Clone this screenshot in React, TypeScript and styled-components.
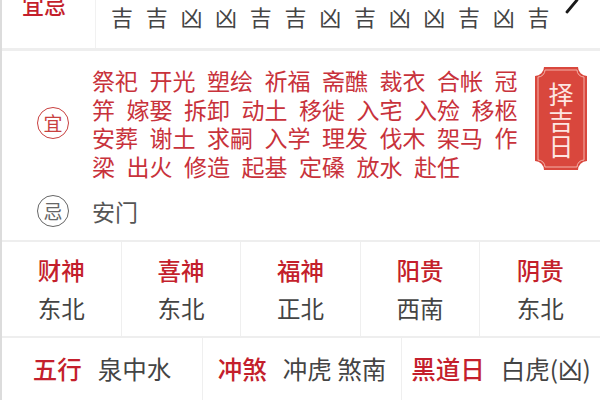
import * as React from 'react'
import styled, { createGlobalStyle } from 'styled-components'

const GlobalStyle = createGlobalStyle`
  html, body {
    margin: 0;
    padding: 0;
    background: #fff;
  }
  body {
    font-family: "Noto Sans CJK SC", "Noto Sans", sans-serif;
  }
`

const RED = '#c41f2c'
const SOFT_RED = '#c8323b'
const GRAY = '#444'

const Page = styled.div`
  width: 598px;
  height: 400px;
  overflow: hidden;
  border-left: 2px solid #dcdcdc;
  background: #fff;
`

const TopRow = styled.div`
  display: flex;
  align-items: center;
  height: 88px;
  margin-top: -40px;
`

const TopLabel = styled.div`
  width: 73px;
  padding-left: 20px;
  align-self: stretch;
  display: flex;
  align-items: center;
  border-right: 1px solid #f1f1f1;
  font-size: 22px;
  font-weight: 500;
  color: ${RED};
`

const Hours = styled.div`
  display: flex;
  flex-direction: column;
  padding-left: 15px;
  margin-top: -6px;
  flex: 1;
`

const HourLine = styled.div<{ $h: number }>`
  display: flex;
  gap: 12.7px;
  height: ${p => p.$h}px;
  line-height: 27px;
  font-size: 22px;
  color: ${GRAY};
`

const Arrow = styled.div`
  width: 40px;
  display: flex;
  justify-content: center;
  padding-right: 8px;
  margin-top: -8px;
`

const Divider = styled.div<{ $h?: number }>`
  height: ${p => p.$h ?? 3}px;
  background: #eeeeee;
`

const AdviceSection = styled.div`
  display: flex;
  flex-direction: column;
  padding: 15px 0 13px;
`

const AdviceRow = styled.div<{ $gap?: number }>`
  display: flex;
  align-items: center;
  margin-top: ${p => p.$gap ?? 0}px;
`

const IconCol = styled.div`
  width: 90px;
  display: flex;
  padding-left: 35px;
  box-sizing: border-box;
`

const Seal = styled.div<{ $color: string }>`
  width: 32px;
  height: 32px;
  border-radius: 50%;
  border: 1.3px solid ${p => p.$color};
  color: ${p => p.$color};
  font-size: 19px;
  line-height: 30px;
  text-align: center;
  box-sizing: border-box;
`

const GoodText = styled.div`
  flex: 1;
  font-size: 23px;
  line-height: 28.6px;
  color: ${SOFT_RED};
  white-space: pre;
`

const BadText = styled.div`
  flex: 1;
  font-size: 23px;
  line-height: 28.6px;
  color: #555;
`

const Badge = styled.div`
  position: relative;
  width: 52px;
  height: 103px;
  margin: 1px 13px 0 0;
  align-self: flex-start;
  display: flex;
  align-items: center;
  justify-content: center;
`

const BadgeShape = styled.svg`
  position: absolute;
  inset: 0;
`

const BadgeText = styled.div`
  position: relative;
  width: 26px;
  font-size: 25px;
  line-height: 26px;
  color: #fde6e2;
  text-align: center;
`

const GodsRow = styled.div`
  display: grid;
  grid-template-columns: repeat(5, 1fr);
  height: 94px;
`

const GodCell = styled.div<{ $last?: boolean }>`
  display: flex;
  flex-direction: column;
  align-items: center;
  justify-content: center;
  border-right: ${p => (p.$last ? 'none' : '1px solid #efefef')};
  font-size: 23.5px;
  line-height: 38px;
`

const GodName = styled.div`
  color: ${RED};
  font-weight: 500;
`

const GodDir = styled.div`
  color: ${GRAY};
`

const InfoRow = styled.div`
  display: grid;
  grid-template-columns: 201px 199px 1fr;
  height: 62px;
`

const InfoCell = styled.div<{ $last?: boolean }>`
  display: flex;
  align-items: center;
  justify-content: center;
  gap: 16px;
  border-right: ${p => (p.$last ? 'none' : '1px solid #efefef')};
  font-size: 24.5px;
  padding-bottom: 1px;
`

const InfoLabel = styled.span`
  color: ${RED};
  font-weight: 500;
`

const InfoValue = styled.span`
  color: ${GRAY};
`

const branches = ['子', '丑', '寅', '卯', '辰', '巳', '午', '未', '申', '酉', '戌', '亥', '子']
const luck = ['吉', '吉', '凶', '凶', '吉', '吉', '凶', '吉', '凶', '凶', '吉', '凶', '吉']

const goodLines = [
  '祭祀 开光 塑绘 祈福 斋醮 裁衣 合帐 冠',
  '笄 嫁娶 拆卸 动土 移徙 入宅 入殓 移柩',
  '安葬 谢土 求嗣 入学 理发 伐木 架马 作',
  '梁 出火 修造 起基 定磉 放水 赴任',
]

const gods = [
  ['财神', '东北'],
  ['喜神', '东北'],
  ['福神', '正北'],
  ['阳贵', '西南'],
  ['阴贵', '东北'],
]

const info = [
  ['五行', '泉中水'],
  ['冲煞', '冲虎 煞南'],
  ['黑道日', '白虎(凶)'],
]

const shape = (x: number, y: number, w: number, h: number, r: number) =>
  `M${x + r},${y} H${x + w - r} A${r},${r} 0 0 0 ${x + w},${y + r} V${y + h - r} ` +
  `A${r},${r} 0 0 0 ${x + w - r},${y + h} H${x + r} A${r},${r} 0 0 0 ${x},${y + h - r} ` +
  `V${y + r} A${r},${r} 0 0 0 ${x + r},${y} Z`

const PickDayBadge = () => (
  <Badge>
    <BadgeShape width="52" height="103" viewBox="0 0 52 103">
      <path d={shape(0, 0, 52, 103, 9)} fill="#d9473d" />
      <path d={shape(3, 3, 46, 97, 7)} fill="none" stroke="#f4b2a9" strokeWidth="1" />
    </BadgeShape>
    <BadgeText>择吉日</BadgeText>
  </Badge>
)

export default function App() {
  return (
    <Page>
      <GlobalStyle />
      <TopRow>
        <TopLabel>宜忌</TopLabel>
        <Hours>
          <HourLine $h={30}>
            {branches.map((b, i) => (
              <span key={i}>{b}</span>
            ))}
          </HourLine>
          <HourLine $h={27}>
            {luck.map((l, i) => (
              <span key={i}>{l}</span>
            ))}
          </HourLine>
        </Hours>
        <Arrow>
          <svg width="16" height="30" viewBox="0 0 16 30">
            <path d="M3 3 L13 15 L3 27" fill="none" stroke="#1a1a1a" strokeWidth="2.8" strokeLinecap="round" strokeLinejoin="round" />
          </svg>
        </Arrow>
      </TopRow>
      <Divider />
      <AdviceSection>
        <AdviceRow>
          <IconCol>
            <Seal $color="#c8403f">宜</Seal>
          </IconCol>
          <GoodText>
            {goodLines.map((l, i) => (
              <div key={i}>{l.split(' ').join('\u2002')}</div>
            ))}
          </GoodText>
          <PickDayBadge />
        </AdviceRow>
        <AdviceRow $gap={15}>
          <IconCol>
            <Seal $color="#666">忌</Seal>
          </IconCol>
          <BadText>安门</BadText>
        </AdviceRow>
      </AdviceSection>
      <Divider $h={2} />
      <GodsRow>
        {gods.map(([n, d], i) => (
          <GodCell key={n} $last={i === gods.length - 1}>
            <GodName>{n}</GodName>
            <GodDir>{d}</GodDir>
          </GodCell>
        ))}
      </GodsRow>
      <Divider $h={2} />
      <InfoRow>
        {info.map(([l, v], i) => (
          <InfoCell key={l} $last={i === info.length - 1}>
            <InfoLabel>{l}</InfoLabel>
            <InfoValue>{v}</InfoValue>
          </InfoCell>
        ))}
      </InfoRow>
    </Page>
  )
}
